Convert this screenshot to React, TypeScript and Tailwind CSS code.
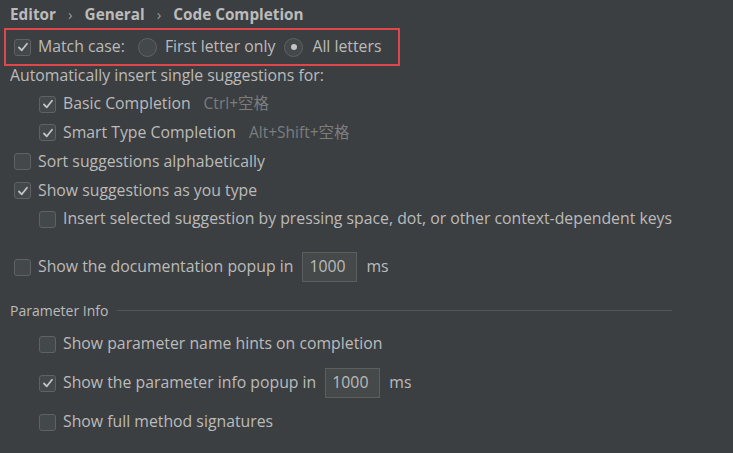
import React from "react";

const font = { fontFamily: '"Open Sans", "Noto Sans CJK SC", sans-serif' };

function Check({ on }: { on?: boolean }) {
  return (
    <span className="flex h-[17px] w-[17px] shrink-0 items-center justify-center rounded-[3px] border border-[#5f6162] bg-[#43494a]">
      {on && (
        <svg width="12" height="12" viewBox="0 0 12 12" fill="none">
          <path d="M2 6.5 L4.8 9.3 L10 2.8" stroke="#c4c4c4" strokeWidth="1.8" strokeLinecap="round" strokeLinejoin="round" />
        </svg>
      )}
    </span>
  );
}

function Radio({ on }: { on?: boolean }) {
  return (
    <span className="flex h-[19px] w-[19px] shrink-0 items-center justify-center rounded-full border border-[#5f6162] bg-[#43494a]">
      {on && <span className="h-[6px] w-[6px] rounded-full bg-[#c4c4c4]" />}
    </span>
  );
}

function Row({ on, label, hint, indent, className = "h-[29px]" }: { on?: boolean; label: string; hint?: string; indent?: boolean; className?: string }) {
  return (
    <div className={`flex items-center ${indent ? "pl-[39px]" : "pl-[14px]"} ${className}`}>
      <Check on={on} />
      <span className="ml-[7px]">{label}</span>
      {hint && <span className="ml-[13px] text-[15.5px] text-[#7b7d7e]">{hint}</span>}
    </div>
  );
}

function NumBox() {
  return (
    <span className="mx-[9px] flex h-[30px] w-[55px] items-center border border-[#5c5e5f] bg-[#45494a] pl-[6px]">1000</span>
  );
}

export default function App() {
  return (
    <div style={font} className="h-[453px] w-[733px] overflow-hidden bg-[#3c3f41] pt-[1px] text-[15.8px] text-[#bbbbbb]">
      <div className="flex h-[26px] items-center gap-[12px] pl-[10px] text-[15.3px] font-bold">
        <span>Editor</span>
        <span className="font-normal text-[#9a9a9a]">›</span>
        <span>General</span>
        <span className="font-normal text-[#9a9a9a]">›</span>
        <span>Code Completion</span>
      </div>
      <div className="mt-[1px] ml-[4px] flex h-[38px] w-[396px] items-center border-2 border-[#e0474a] pl-[8px]">
        <Check on />
        <span className="ml-[7px]">Match case:</span>
        <span className="ml-[13px]"><Radio /></span>
        <span className="ml-[8px]">First letter only</span>
        <span className="ml-[9px]"><Radio on /></span>
        <span className="ml-[9px]">All letters</span>
      </div>
      <div className="flex h-[20px] items-center pl-[10px]">Automatically insert single suggestions for:</div>
      <Row on indent label="Basic Completion" hint="Ctrl+空格" className="mt-[4px] h-[28px]" />
      <Row on indent label="Smart Type Completion" hint="Alt+Shift+空格" />
      <Row label="Sort suggestions alphabetically" />
      <Row on label="Show suggestions as you type" />
      <Row indent label="Insert selected suggestion by pressing space, dot, or other context-dependent keys" className="h-[28px]" />
      <div className="mt-[19px] flex h-[30px] items-center pl-[14px]">
        <Check />
        <span className="ml-[7px]">Show the documentation popup in</span>
        <NumBox />
        <span>ms</span>
      </div>
      <div className="mt-[18px] flex h-[20px] items-center pl-[10px] text-[14px]">
        <span>Parameter Info</span>
        <span className="ml-[9px] h-px w-[555px] bg-[#535658]" />
      </div>
      <Row indent label="Show parameter name hints on completion" className="mt-[10px] h-[28px]" />
      <div className="mt-[10px] flex h-[30px] items-center pl-[39px]">
        <Check on />
        <span className="ml-[7px]">Show the parameter info popup in</span>
        <NumBox />
        <span>ms</span>
      </div>
      <Row indent label="Show full method signatures" className="mt-[10px] h-[28px]" />
    </div>
  );
}
